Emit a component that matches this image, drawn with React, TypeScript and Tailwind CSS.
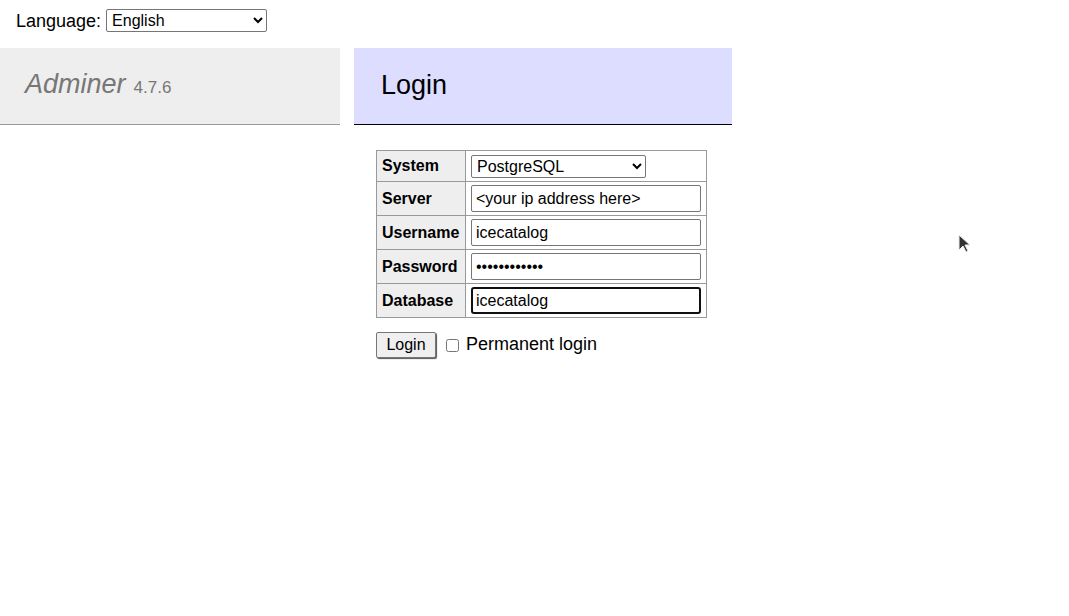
import React from "react";

const rows = [
  { label: "Server", value: "<your ip address here>", type: "text" },
  { label: "Username", value: "icecatalog", type: "text" },
  { label: "Password", value: "icecatalog12", type: "password" },
];

const App = () => {
  return (
    <div
      className="relative min-h-[616px] w-full bg-white text-[18px] leading-[1.25] text-black"
      style={{ fontFamily: '"Liberation Sans", Arial, sans-serif' }}
    >
      {/* language bar */}
      <div className="flex h-[48px] items-start pl-[16px] pt-[9px]">
        <span className="mt-[1px]">Language:</span>
        <select
          defaultValue="en"
          className="ml-[5px] h-[23px] w-[161px] rounded-[2px] border border-[#767676] bg-white pl-[1px] text-[16px]"
        >
          <option value="en">English</option>
        </select>
      </div>

      <div className="flex items-start">
        {/* menu */}
        <div className="w-[340px] shrink-0">
          <div className="flex h-[77px] items-center border-b border-[#999] bg-[#eee] pb-[2px] pl-[25px]">
            <span className="text-[27px] italic text-[#777]">Adminer</span>
            <span className="ml-[8px] mt-[6px] text-[17px] text-[#777]">4.7.6</span>
          </div>
        </div>

        {/* content */}
        <div className="ml-[14px] w-[378px] shrink-0">
          <div className="flex h-[77px] items-center border-b border-black bg-[#ddf] pl-[27px]">
            <h1 className="text-[27px] font-normal">Login</h1>
          </div>

          <div className="pl-[22px] pt-[25px]">
            <table className="border-collapse text-[16px]">
              <tbody>
                <tr>
                  <th className="w-[89px] border border-[#999] bg-[#eee] px-[5px] py-0 text-left font-bold">System</th>
                  <td className="h-[31px] border border-[#999] py-0 pl-[5px] pr-[5px]">
                    <select
                      defaultValue="pgsql"
                      className="block h-[23px] w-[175px] rounded-[2px] border border-[#767676] bg-white pl-[1px] text-[16px]"
                    >
                      <option value="pgsql">PostgreSQL</option>
                    </select>
                  </td>
                </tr>
                {rows.map((r) => (
                  <tr key={r.label}>
                    <th className="border border-[#999] bg-[#eee] px-[5px] py-0 text-left font-bold">{r.label}</th>
                    <td className="h-[34px] border border-[#999] py-0 pl-[5px] pr-[5px]">
                      <input
                        type={r.type}
                        defaultValue={r.value}
                        className="block h-[27px] w-[230px] rounded-[2px] border border-[#767676] px-[4px] text-[16px] outline-none"
                      />
                    </td>
                  </tr>
                ))}
                <tr>
                  <th className="border border-[#999] bg-[#eee] px-[5px] py-0 text-left font-bold">Database</th>
                  <td className="h-[34px] border border-[#999] py-0 pl-[5px] pr-[5px]">
                    <input
                      type="text"
                      defaultValue="icecatalog"
                      className="block h-[27px] w-[230px] rounded-[3px] border-2 border-[#101010] px-[3px] text-[16px] outline-none"
                    />
                  </td>
                </tr>
              </tbody>
            </table>

            <div className="mt-[14px] flex items-center">
              <button className="h-[26px] w-[60px] rounded-[2px] border border-[#767676] bg-[#efefef] text-[16px] shadow-[1px_1px_1px_#555]">
                Login
              </button>
              <label className="ml-[10px] flex items-center">
                <input type="checkbox" className="h-[13px] w-[13px]" />
                <span className="ml-[7px] mb-[1px]">Permanent login</span>
              </label>
            </div>
          </div>
        </div>
      </div>

      {/* mouse cursor */}
      <svg className="absolute left-[958px] top-[234px]" width="14" height="20" viewBox="0 0 14 20">
        <path d="M1 1 L1 16 L5 12 L8 18 L10 17 L7 11 L12 11 Z" fill="#333" stroke="#eee" strokeWidth="1" />
      </svg>
    </div>
  );
};

export default App;
